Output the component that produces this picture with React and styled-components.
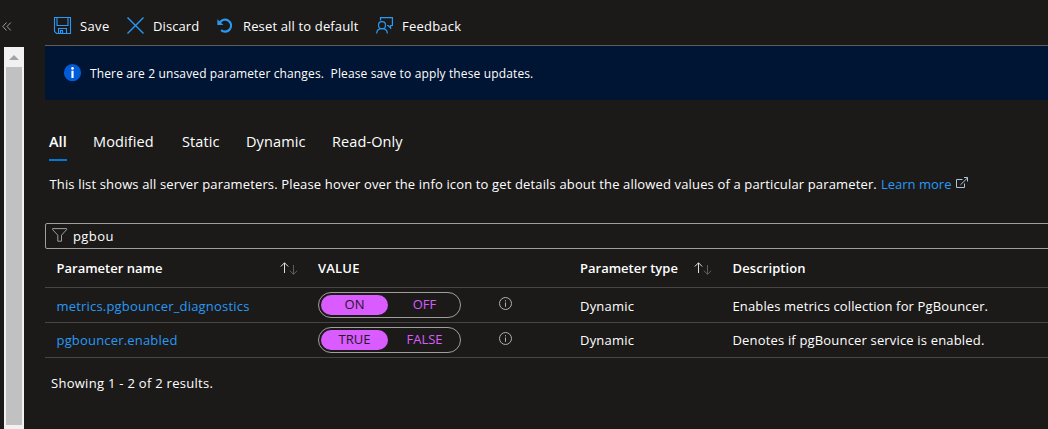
import React from 'react';
import styled, { createGlobalStyle } from 'styled-components';

const Global = createGlobalStyle`
  * { box-sizing: border-box; }
  html, body { margin: 0; height: 100%; overflow: hidden; background: #1b1a19; }
  body { font-family: "Open Sans", "Noto Sans", sans-serif; font-size: 13px; color: #ffffff; }
  svg { display: block; flex: none; overflow: visible; }
`;

const Page = styled.div`
  display: flex;
  width: 1048px;
  height: 429px;
  overflow: hidden;
`;

const Rail = styled.aside`
  flex: none;
  width: 24px;
  display: flex;
  flex-direction: column;
`;

const Collapse = styled.div`
  height: 47px;
  padding: 22px 0 0 2px;
`;

const ScrollTrack = styled.div`
  flex: 1;
  margin-left: 4px;
  padding: 0 2px 4px;
  background: #f1f1f1;
  display: flex;
  flex-direction: column;
`;

const ScrollUp = styled.div`
  height: 20px;
  padding: 8px 0 0 3px;
`;

const ScrollThumb = styled.div`
  flex: 1;
  background: #c1c1c1;
`;

const Main = styled.main`
  flex: none;
  width: 1003px;
  margin-left: 21px;
`;

const Text = styled.span`
  white-space: pre;
  line-height: 18px;
  font-size: ${(p) => p.$size || 13}px;
  letter-spacing: ${(p) => p.$ls || 0}px;
  font-weight: ${(p) => p.$weight || 400};
`;

const Link = styled(Text)`
  color: #2899f5;
`;

const Toolbar = styled.div`
  display: flex;
  height: 46px;
  padding: 0 0 0 9px;
  border-bottom: 1px solid #605e5c;
`;

const Command = styled.div`
  display: flex;
  flex: none;
  width: ${(p) => p.$width}px;
  padding-top: 17px;
`;

const CommandIcon = styled.div`
  flex: none;
  width: 26px;
`;

const Banner = styled.div`
  display: flex;
  height: 54px;
  padding: 18px 0 0 19px;
  background: #001433;
  border-radius: 0 0 0 2px;
`;

const BannerText = styled.div`
  margin-left: 9px;
`;

const Tabs = styled.nav`
  display: flex;
  height: 61px;
  padding: 32px 0 0 4px;
`;

const Tab = styled.div`
  flex: none;
  width: ${(p) => p.$width}px;
  height: 29px;
`;

const TabLabel = styled.div`
  display: inline-block;
  width: 18px;
  height: 29px;
  padding-top: 1px;
  border-bottom: 2px solid ${(p) => (p.$active ? '#0078d4' : 'transparent')};
`;

const Intro = styled.div`
  display: flex;
  height: 62px;
  padding: 14px 0 0 4px;
`;

const IntroText = styled.div`
  flex: none;
  width: 832px;
  padding-left: 0.5px;
`;

const IntroLink = styled.div`
  flex: none;
  width: 75px;
`;

const IntroIcon = styled.div`
  padding-top: 2px;
`;

const Filter = styled.div`
  display: flex;
  width: 1010px;
  height: 26px;
  padding: 4px 0 0 6px;
  border: 1px solid #a19f9d;
  border-radius: 2px;
`;

const FilterText = styled.div`
  margin: -1px 0 0 5px;
`;

const Row = styled.div`
  display: grid;
  grid-template-columns: 261.5px 179.5px 82.5px 152.5px 1fr;
  height: ${(p) => (p.$head ? 39 : 35)}px;
  padding-left: 11.5px;
  border-bottom: 1px solid #484644;
`;

const Cell = styled.div`
  display: flex;
  padding-top: ${(p) => p.$top}px;
`;

const Sort = styled.div`
  margin-left: auto;
  padding: 3px ${(p) => p.$right}px 0 0;
`;

const Switch = styled.div`
  display: flex;
  width: 143px;
  height: 26px;
  padding: 2px;
  border: 1px solid #a19f9d;
  border-radius: 13px;
`;

const Option = styled.div`
  flex: none;
  width: ${(p) => (p.$on ? 67 : 73)}px;
  height: 20px;
  border-radius: 10px;
  text-align: center;
  line-height: 18px;
  background: ${(p) => (p.$on ? '#da5bff' : 'transparent')};
  color: ${(p) => (p.$on ? '#1b1a19' : '#da5bff')};
`;

const InfoSlot = styled.div`
  padding-left: 1px;
`;

const Footer = styled.div`
  padding: 16px 0 0 6px;
`;

const Stroke = ({ w, h, color = '#2899f5', sw = 1, children }) => (
  <svg width={w} height={h} viewBox={`0 0 ${w} ${h}`} fill="none" stroke={color} strokeWidth={sw}>
    {children}
  </svg>
);

const SaveIcon = () => (
  <Stroke w={17} h={17} sw={1.1}>
    <path d="M.5 .5H16.5V16.5H2.6L.5 14.4Z M3 .5V8.5H14V.5 M4.5 16.5V11.5H12.5V16.5 M6.5 16V13.5H8.5V16" />
  </Stroke>
);

const DiscardIcon = () => (
  <Stroke w={17} h={17} sw={1.4}>
    <path d="M.5 .5L16.5 16.5M16.5 .5L.5 16.5" />
  </Stroke>
);

const UndoIcon = () => (
  <Stroke w={16} h={17} sw={2.1}>
    <path d="M2.8 5.8A6 6 0 1 1 4.1 13.1" />
    <path d="M.4 2.2V8H6.4Z" fill="#2899f5" stroke="none" />
  </Stroke>
);

const FeedbackIcon = () => (
  <Stroke w={17} h={17} sw={1.2}>
    <path d="M4.5 3.4V.6H16.4V8.5H14.6V11L12.2 8.5H11" />
    <circle cx="6" cy="8.2" r="3.5" />
    <path d="M.6 16.5C.8 13.5 3 11.7 6 11.7S11.2 13.5 11.4 16.5" />
  </Stroke>
);

const FunnelIcon = () => (
  <Stroke w={16} h={15} color="#a19f9d">
    <path d="M.6 .6H14.6V1.6L9.5 7.2V13.2H5.8V7.2L.6 1.6Z" />
  </Stroke>
);

const InfoIcon = () => (
  <Stroke w={13} h={13} color="#b3b0ad">
    <circle cx="6.5" cy="6.5" r="6" />
    <path d="M6.5 5.5V9.8M6.5 3.2V4.4" />
  </Stroke>
);

const BannerInfoIcon = () => (
  <svg width="17" height="17" viewBox="0 0 17 17">
    <circle cx="8.5" cy="8.7" r="8.6" fill="#015cda" />
    <circle cx="8.5" cy="4.4" r="1.3" fill="#fff" />
    <path d="M7.4 6.7H9.6V14H7.4Z" fill="#fff" />
  </svg>
);

const SortIcon = () => (
  <Stroke w={18} h={13} color="#e1dfdd">
    <path d="M4.5 11V.8M.8 4.5L4.5 .8L8.2 4.5" />
    <path d="M13.5 3V12.2M9.8 8.7L13.5 12.3L17.2 8.7" stroke="#605e5c" />
  </Stroke>
);

const ExternalIcon = () => (
  <Stroke w={13} h={12} color="#a9c4dc">
    <path d="M6.5 2.5H.5V10.5H8.5V6.5M4.5 7.8L11.8 .6M8 .5H11.5V4.5" />
  </Stroke>
);

const commands = [
  { label: 'Save', icon: <SaveIcon />, width: 73, ls: 0.35 },
  { label: 'Discard', icon: <DiscardIcon />, width: 90, ls: 0.1 },
  { label: 'Reset all to default', icon: <UndoIcon />, width: 159, ls: 0.15 },
  { label: 'Feedback', icon: <FeedbackIcon />, width: 100, ls: 0.22 },
];

const tabs = [
  { label: 'All', width: 44, active: true },
  { label: 'Modified', width: 89 },
  { label: 'Static', width: 64 },
  { label: 'Dynamic', width: 86 },
  { label: 'Read-Only', width: 90 },
];

const rows = [
  {
    name: 'metrics.pgbouncer_diagnostics', nameLs: 0.19, on: 'ON', off: 'OFF',
    text: 'Enables metrics collection for PgBouncer.', textLs: 0.13, top: 9,
  },
  {
    name: 'pgbouncer.enabled', nameLs: 0.18, on: 'TRUE', off: 'FALSE',
    text: 'Denotes if pgBouncer service is enabled.', textLs: 0.17, top: 8,
  },
];

export default function App() {
  return (
    <>
      <Global />
      <Page>
        <Rail>
          <Collapse>
            <Stroke w={10} h={9} color="#a19f9d">
              <path d="M4.5 .5L.8 4.5L4.5 8.5M8.8 .5L5 4.5L8.8 8.5" />
            </Stroke>
          </Collapse>
          <ScrollTrack>
            <ScrollUp>
              <svg width="10" height="5"><path d="M0 5L5 0L10 5Z" fill="#a3a3a3" /></svg>
            </ScrollUp>
            <ScrollThumb />
          </ScrollTrack>
        </Rail>
        <Main>
          <Toolbar>
            {commands.map((c) => (
              <Command key={c.label} $width={c.width}>
                <CommandIcon>{c.icon}</CommandIcon>
                <Text $ls={c.ls}>{c.label}</Text>
              </Command>
            ))}
          </Toolbar>
          <Banner>
            <BannerInfoIcon />
            <BannerText>
              <Text $size={12} $ls={0.135}>{'There are 2 unsaved parameter changes.  Please save to apply these updates.'}</Text>
            </BannerText>
          </Banner>
          <Tabs>
            {tabs.map((t) => (
              <Tab key={t.label} $width={t.width}>
                <TabLabel $active={t.active}>
                  <Text $size={14.5} $ls={t.active ? 0 : 0.1} $weight={t.active ? 600 : 400}>{t.label}</Text>
                </TabLabel>
              </Tab>
            ))}
          </Tabs>
          <Intro>
            <IntroText>
              <Text $ls={0.145}>This list shows all server parameters. Please hover over the info icon to get details about the allowed values of a particular parameter.</Text>
            </IntroText>
            <IntroLink><Link>Learn more</Link></IntroLink>
            <IntroIcon><ExternalIcon /></IntroIcon>
          </Intro>
          <Filter>
            <FunnelIcon />
            <FilterText><Text $ls={0.4}>pgbou</Text></FilterText>
          </Filter>
          <Row $head>
            <Cell $top={10}>
              <Text $weight={600}>Parameter name</Text>
              <Sort $right={20}><SortIcon /></Sort>
            </Cell>
            <Cell $top={10}><Text $weight={600} $ls={0.2}>VALUE</Text></Cell>
            <Cell />
            <Cell $top={10}>
              <Text $weight={600}>Parameter type</Text>
              <Sort $right={21}><SortIcon /></Sort>
            </Cell>
            <Cell $top={10}><Text $weight={600} $ls={0.1}>Description</Text></Cell>
          </Row>
          {rows.map((r) => (
            <Row key={r.name}>
              <Cell $top={r.top}><Link $ls={r.nameLs}>{r.name}</Link></Cell>
              <Cell $top={4}>
                <Switch>
                  <Option $on><Text>{r.on}</Text></Option>
                  <Option><Text>{r.off}</Text></Option>
                </Switch>
              </Cell>
              <Cell $top={9}><InfoSlot><InfoIcon /></InfoSlot></Cell>
              <Cell $top={r.top}><Text $ls={0.2}>Dynamic</Text></Cell>
              <Cell $top={r.top}><Text $ls={r.textLs}>{r.text}</Text></Cell>
            </Row>
          ))}
          <Footer><Text $ls={0.28}>Showing 1 - 2 of 2 results.</Text></Footer>
        </Main>
      </Page>
    </>
  );
}
